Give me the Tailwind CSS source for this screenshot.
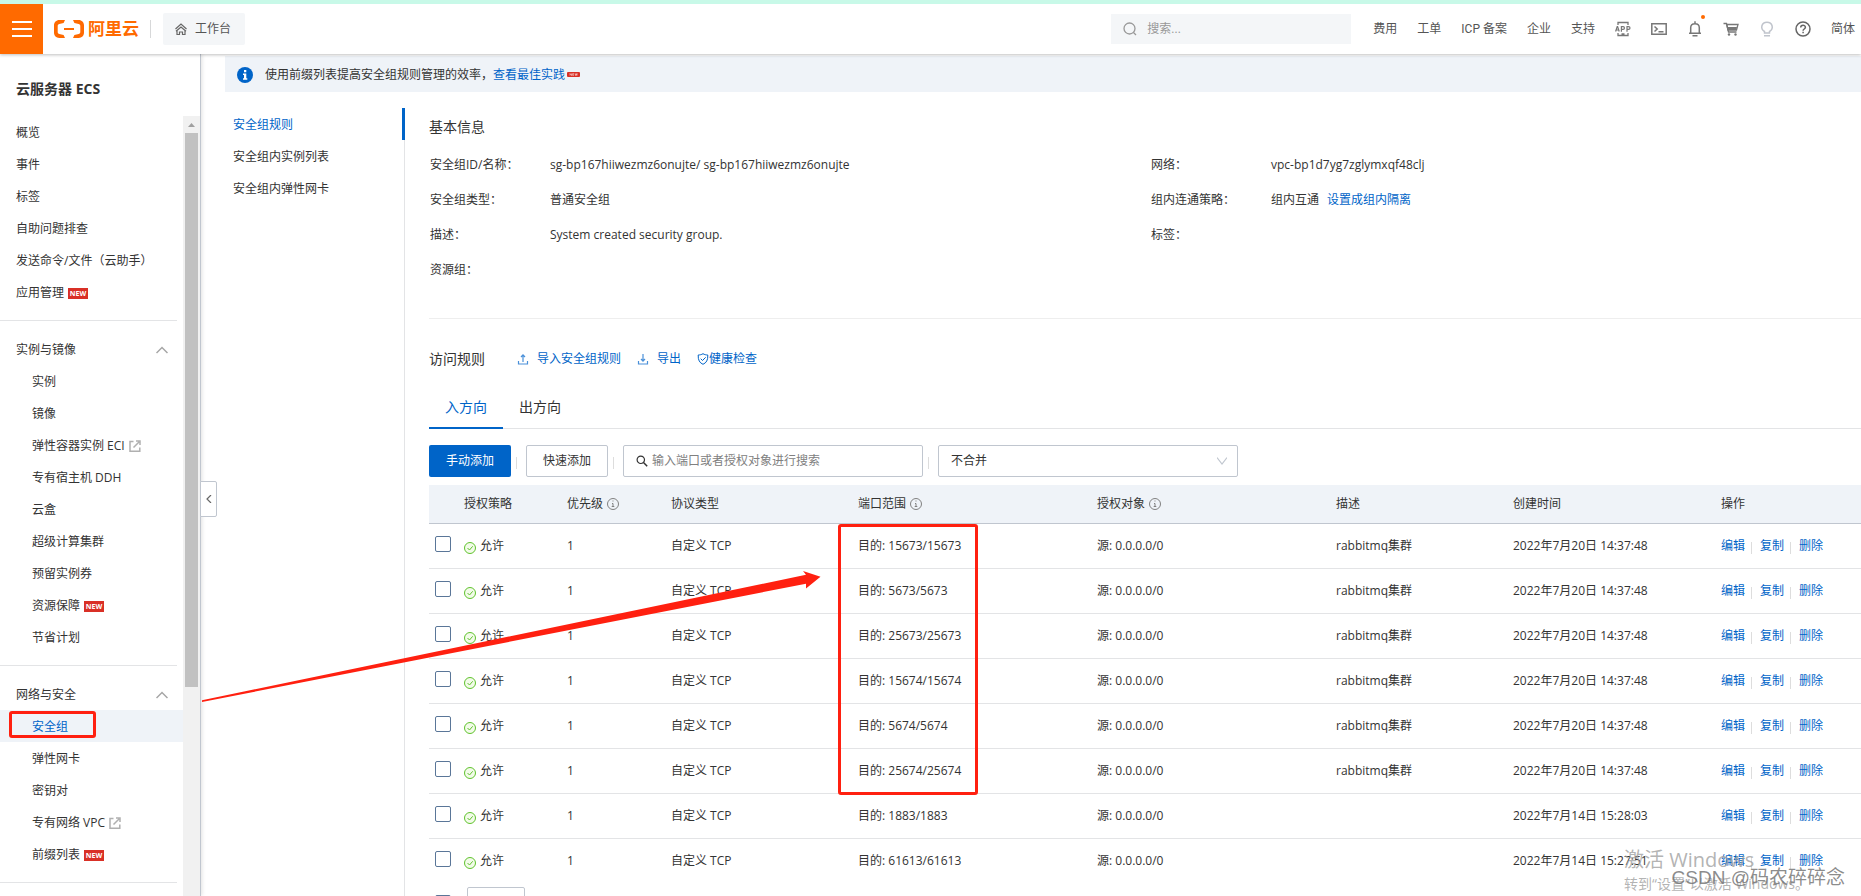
<!DOCTYPE html>
<html lang="zh-CN">
<head>
<meta charset="utf-8">
<title>云服务器 ECS - 安全组规则</title>
<script src="https://cdn.jsdelivr.net/npm/@tailwindcss/browser@4"></script>
</head>
<body class="relative flex h-screen flex-col overflow-hidden bg-white font-['Open_Sans','Noto_Sans_CJK_SC',sans-serif] text-[12px] leading-4 text-[#333333]">

<header class="relative z-10 flex h-[54px] shrink-0 items-stretch border-t-4 border-[#c8f9e8] bg-white font-['Roboto','Noto_Sans_CJK_SC',sans-serif] text-[#555555] shadow-[0_1px_3px_rgba(0,0,0,0.25)]">
  <button type="button" aria-label="菜单" class="flex w-[43px] items-center justify-center bg-[#ff6a00]">
    <svg class="h-4 w-5" viewBox="0 0 20 16" fill="#fff"><path d="M0 0h20v2H0zM0 7h20v2H0zM0 14h20v2H0z"/></svg>
  </button>
  <a href="#" class="ml-[11px] flex items-center gap-1 text-[17px] font-bold text-[#ff6a00]">
    <svg class="h-5 w-[30px]" viewBox="0 0 30 20" fill="#ff6a00"><path d="M11 1 9.600 4 5.300 5C4.300 5.300 3.700 6 3.700 7v6c0 1 .6 1.700 1.600 2L9.600 16 11 19H5.200C2.300 19 0 16.700 0 13.800V6.200C0 3.300 2.300 1 5.200 1zM19 1l1.400 3 4.300 1c1 .3 1.600 1 1.600 2v6c0 1-.6 1.700-1.600 2l-4.300 1L19 19h5.800c2.900 0 5.200-2.300 5.200-5.200V6.200C30 3.300 27.700 1 24.800 1zM10 9h10v2H10z"/></svg>
    <span>阿里云</span>
  </a>
  <span class="ml-[11px] h-[18px] w-px self-center bg-[#d7d8d9]"></span>
  <a href="#" class="ml-3 flex h-8 w-[82px] items-center gap-2 self-center rounded-[2px] bg-[#f4f6f8] pl-3">
    <svg class="size-3" viewBox="0 0 12 12" fill="none" stroke="#666" stroke-width="1.2"><path d="M.5 6 6 1l5.500 5M1 8.300 6 4l5 4.300M2 7.500v4h2.500V9h3v2.500H10v-4"/></svg>
    <span>工作台</span>
  </a>
  <label class="ml-auto flex h-[30px] w-[240px] items-center gap-[10px] self-center bg-[#f4f6f8] pl-3 text-[#999999]">
    <svg class="size-[14px] shrink-0" viewBox="0 0 14 14" fill="none" stroke="#999" stroke-width="1.300"><circle cx="6.500" cy="6.500" r="5.500"/><path d="m10.500 10.500 2.500 2.500"/></svg>
    <input type="text" placeholder="搜索..." aria-label="搜索" class="w-full min-w-0 bg-transparent outline-none placeholder:text-[#999999]">
  </label>
  <nav class="ml-[22px] mr-[6px] flex items-center gap-5 whitespace-nowrap">
    <a href="#">费用</a>
    <a href="#">工单</a>
    <a href="#">ICP 备案</a>
    <a href="#">企业</a>
    <a href="#">支持</a>
    <a href="#" aria-label="App">
      <svg class="size-4" viewBox="0 0 16 16" fill="none" stroke="#777" stroke-width="1.300"><path d="M3 4V1.500h10V4M3 12v2.500h10V12M6.500 13h3"/><path d="M.6 10.500 2.200 5.500h.4l1.600 5M1.200 9h2.500M6.400 10.800V5.700h1.700c1.800 0 1.800 2.600 0 2.600H6.400M12 10.800V5.700h1.500c2 0 2 2.600 0 2.600H12" stroke-width="1.200"/></svg>
    </a>
    <a href="#" aria-label="Cloud Shell">
      <svg class="size-4" viewBox="0 0 16 16" fill="none" stroke="#777" stroke-width="1.500"><path d="M.8 2.800h14.400v10.500H.8z"/><path d="m3.500 5.500 2.700 2.500-2.700 2.500M7.500 10.700h5"/></svg>
    </a>
    <a href="#" aria-label="消息" class="relative">
      <svg class="size-4" viewBox="0 0 16 16" fill="none" stroke="#777" stroke-width="1.500"><path d="M2 12.200h12M3.700 12V6.700c0-5.400 8.600-5.400 8.600 0V12M8 .3v2M5.500 14.800h5"/></svg>
      <span class="absolute -top-1.5 left-3.5 size-1 rounded-full bg-[#ff6a00]"></span>
    </a>
    <a href="#" aria-label="购物车">
      <svg class="size-4" viewBox="0 0 16 16"><path d="M.5 2.500h3L5.500 11h8" fill="none" stroke="#777" stroke-width="1.300"/><path d="M3.700 3.500H15L13.500 9H5z" fill="none" stroke="#777" stroke-width="1.300"/><path d="M4.500 6h9.500l-.7 3H5z" fill="#777"/><circle cx="6" cy="13.500" r="1.200" fill="#777"/><circle cx="12.500" cy="13.500" r="1.200" fill="#777"/></svg>
    </a>
    <a href="#" aria-label="提示">
      <svg class="size-4" viewBox="0 0 16 16" fill="none" stroke="#c0c4cc" stroke-width="1.500"><path d="M5.500 12v-1.500C.8 7.500 2.500 1.200 8 1.200s7.200 6.300 2.500 9.300V12zM5 14.800h6"/></svg>
    </a>
    <a href="#" aria-label="帮助">
      <svg class="size-4" viewBox="0 0 16 16" fill="none" stroke="#666" stroke-width="1.500"><circle cx="8" cy="8" r="7"/><path d="M5.700 6.600c0-3.200 4.700-2.900 4.700-.3 0 1.700-2.300 1.700-2.300 3.400M8.100 10.800v1.500"/></svg>
    </a>
    <a href="#">简体</a>
  </nav>
</header>

<div class="flex min-h-0 flex-1">
  <aside class="relative z-[5] flex w-[201px] shrink-0 flex-col border-r border-[#c0c6cf] bg-white shadow-[1px_0_4px_rgba(0,0,0,0.12)]">
    <h1 class="h-[62px] shrink-0 pt-6 pl-4 text-[14px] leading-[22px] font-bold">云服务器 ECS</h1>
    <div class="flex min-h-0 flex-1">
      <nav class="min-w-0 flex-1 overflow-hidden leading-8">
        <ul>
          <li><a href="#" class="block h-8 pt-px pl-4">概览</a></li>
          <li><a href="#" class="block h-8 pt-px pl-4">事件</a></li>
          <li><a href="#" class="block h-8 pt-px pl-4">标签</a></li>
          <li><a href="#" class="block h-8 pt-px pl-4">自助问题排查</a></li>
          <li><a href="#" class="block h-8 pt-px pl-4">发送命令/文件（云助手）</a></li>
          <li><a href="#" class="flex h-8 items-center gap-1 pt-0.5 pl-4">应用管理<span class="h-[11px] w-5 bg-[#d93026] text-center text-[7px] leading-[11px] font-bold text-white">NEW</span></a></li>
        </ul>
        <section>
          <button type="button" class="mt-3 mr-1.5 flex h-[45px] w-[177px] items-center justify-between border-t border-[#e3e4e6] pt-3.5 pr-[9px] pl-4">实例与镜像
            <svg class="h-2 w-3" viewBox="0 0 12 8" fill="none" stroke="#a6a6a6" stroke-width="1.500"><path d="m.5 7 5.500-5.500L11.500 7"/></svg>
          </button>
          <ul>
            <li><a href="#" class="block h-8 pt-px pl-8">实例</a></li>
            <li><a href="#" class="block h-8 pt-px pl-8">镜像</a></li>
            <li><a href="#" class="flex h-8 items-center gap-1 pt-0.5 pl-8">弹性容器实例 ECI
              <svg class="size-3" viewBox="0 0 12 12" fill="none" stroke="#b0b0b0" stroke-width="1.500"><path d="M4.500 1.500H1v9.700h9.800V7.500M4.500 7.500 10 2M7 1h4v4"/></svg></a></li>
            <li><a href="#" class="block h-8 pt-px pl-8">专有宿主机 DDH</a></li>
            <li><a href="#" class="block h-8 pt-px pl-8">云盒</a></li>
            <li><a href="#" class="block h-8 pt-px pl-8">超级计算集群</a></li>
            <li><a href="#" class="block h-8 pt-px pl-8">预留实例券</a></li>
            <li><a href="#" class="flex h-8 items-center gap-1 pt-0.5 pl-8">资源保障<span class="h-[11px] w-5 bg-[#d93026] text-center text-[7px] leading-[11px] font-bold text-white">NEW</span></a></li>
            <li><a href="#" class="block h-8 pt-px pl-8">节省计划</a></li>
          </ul>
        </section>
        <section>
          <button type="button" class="mt-3 mr-1.5 flex h-[45px] w-[177px] items-center justify-between border-t border-[#e3e4e6] pt-3.5 pr-[9px] pl-4">网络与安全
            <svg class="h-2 w-3" viewBox="0 0 12 8" fill="none" stroke="#a6a6a6" stroke-width="1.500"><path d="m.5 7 5.500-5.500L11.500 7"/></svg>
          </button>
          <ul>
            <li class="relative"><a href="#" aria-current="page" class="block h-8 bg-[#eff3f8] pt-px pl-8 text-[#0064c8]">安全组</a>
              <span class="pointer-events-none absolute top-px left-[9px] h-[27px] w-[87px] rounded-[3px] border-3 border-[#ff2010]"></span></li>
            <li><a href="#" class="block h-8 pt-px pl-8">弹性网卡</a></li>
            <li><a href="#" class="block h-8 pt-px pl-8">密钥对</a></li>
            <li><a href="#" class="flex h-8 items-center gap-1 pt-0.5 pl-8">专有网络 VPC
              <svg class="size-3" viewBox="0 0 12 12" fill="none" stroke="#b0b0b0" stroke-width="1.500"><path d="M4.500 1.500H1v9.700h9.800V7.500M4.500 7.500 10 2M7 1h4v4"/></svg></a></li>
            <li><a href="#" class="flex h-8 items-center gap-1 pt-0.5 pl-8">前缀列表<span class="h-[11px] w-5 bg-[#d93026] text-center text-[7px] leading-[11px] font-bold text-white">NEW</span></a></li>
          </ul>
          <div class="mt-3 w-[177px] border-t border-[#e3e4e6]"></div>
        </section>
      </nav>
      <div class="flex w-[17px] flex-col items-center bg-[#f1f1f1]" aria-hidden="true">
        <svg class="h-[17px] w-[17px]" viewBox="0 0 17 17" fill="#a0a0a0"><path d="m5 11 3.500-4 3.500 4z"/></svg>
        <div class="h-[554px] w-[13px] bg-[#c1c1c1]"></div>
      </div>
    </div>
    <button type="button" aria-label="收起" class="absolute top-[427px] left-[200px] flex h-9 w-[17px] items-center justify-center rounded-r-[2px] border border-[#c0c6cf] bg-white">
      <svg class="h-2 w-[6px]" viewBox="0 0 6 8" fill="none" stroke="#666" stroke-width="1.200"><path d="M5 0 1 4l4 4"/></svg>
    </button>
  </aside>

  <main class="flex min-w-0 flex-1 flex-col pt-0.5 pl-6">
    <div class="flex h-9 shrink-0 items-center bg-[#eff3f8] pt-px pl-3">
      <svg class="mr-3 size-4" viewBox="0 0 16 16"><circle cx="8" cy="8" r="8" fill="#0064c8"/><path d="M7 3h2.300v2.200H7zM6 6.500h3.300v4.700h1v1.600H6v-1.600h1V8.100H6z" fill="#fff"/></svg>
      <span>使用前缀列表提高安全组规则管理的效率，</span><a href="#" class="text-[#0064c8]">查看最佳实践</a>
      <svg class="ml-0.5 h-[5px] w-[13px]" viewBox="0 0 13 5" aria-hidden="true"><rect width="13" height="5" rx="1" fill="#d93026"/><path d="M3 3.500v-2l1.500 2v-2M6.800 1.500H5.700v2h1.100M5.700 2.500h1M8 1.500l.6 2 .6-2 .6 2 .6-2" fill="none" stroke="#fff" stroke-width=".5"/></svg>
    </div>

    <div class="flex min-h-0 flex-1 pt-4">
      <nav class="flex w-[180px] shrink-0 flex-col border-r border-[#e3e4e6] leading-8">
        <a href="#" aria-current="page" class="-mr-px h-8 border-r-3 border-[#0064c8] pt-px pl-2 text-[#0064c8]">安全组规则</a>
        <a href="#" class="h-8 pt-px pl-2">安全组内实例列表</a>
        <a href="#" class="h-8 pt-px pl-2">安全组内弹性网卡</a>
      </nav>

      <div class="-mr-2.5 ml-6 min-w-0 flex-1 overflow-hidden pt-1">
        <h2 class="text-[14px] leading-[30px]">基本信息</h2>
        <div class="mt-[5px] grid grid-cols-2 leading-[35px]">
          <dl class="grid grid-cols-[120px_1fr] content-start pl-px">
            <dt>安全组ID/名称：</dt><dd>sg-bp167hiiwezmz6onujte/ sg-bp167hiiwezmz6onujte</dd>
            <dt>安全组类型：</dt><dd>普通安全组</dd>
            <dt>描述：</dt><dd>System created security group.</dd>
            <dt>资源组：</dt><dd></dd>
          </dl>
          <dl class="grid grid-cols-[120px_1fr] content-start pl-px">
            <dt>网络：</dt><dd>vpc-bp1d7yg7zglymxqf48clj</dd>
            <dt>组内连通策略：</dt><dd>组内互通<a href="#" class="ml-2 text-[#0064c8]">设置成组内隔离</a></dd>
            <dt>标签：</dt><dd></dd>
          </dl>
        </div>
        <hr class="mt-[31px] border-[#eeeeee]">

        <div class="mt-6 flex h-8 items-center">
          <h2 class="text-[14px]">访问规则</h2>
          <a href="#" class="ml-8 flex items-center gap-2 text-[#0064c8]">
            <svg class="size-3" viewBox="0 0 12 12" fill="none" stroke="#4a90d9" stroke-width="1.200"><path d="M1.500 8v3h9V8M6 9V2M4 4l2-2.200L8 4"/></svg>导入安全组规则</a>
          <a href="#" class="ml-4 flex items-center gap-2 text-[#0064c8]">
            <svg class="size-3" viewBox="0 0 12 12" fill="none" stroke="#4a90d9" stroke-width="1.200"><path d="M1.500 8v3h9V8M6 1v7M4 6l2 2.200L8 6"/></svg>导出</a>
          <a href="#" class="ml-4 flex items-center text-[#0064c8]">
            <svg class="size-3" viewBox="0 0 12 12" fill="none" stroke="#0064c8"><path d="M6 .7c1.500 1 3 1.200 4.800 1.300C11 7 9.500 9.800 6 11.300 2.500 9.800 1 7 1.200 2 3 1.900 4.500 1.700 6 .7zM3.700 5.700l1.800 1.800L8.700 4.300"/></svg>健康检查</a>
        </div>

        <div role="tablist" class="mt-3 flex h-[42px] border-b border-[#e3e4e6] text-[14px]">
          <button type="button" role="tab" aria-selected="true" class="-mb-px h-[42px] border-b-2 border-[#0064c8] px-4 text-[#0064c8]">入方向</button>
          <button type="button" role="tab" aria-selected="false" class="-mb-px h-[42px] border-b-2 border-transparent px-4">出方向</button>
        </div>

        <div class="mt-4 flex h-8 items-center">
          <button type="button" class="h-8 w-[82px] rounded-[2px] bg-[#0064c8] text-white">手动添加</button>
          <span class="mx-[5px] mt-1 h-3 w-px bg-[#dddddd]"></span>
          <button type="button" class="ml-1 h-8 w-[82px] rounded-[2px] border border-[#c0c6cf]">快速添加</button>
          <span class="mx-[5px] mt-1 h-3 w-px bg-[#dddddd]"></span>
          <label class="ml-1 flex h-8 w-[300px] items-center gap-1 rounded-[2px] border border-[#c0c6cf] px-3">
            <svg class="size-3 shrink-0" viewBox="0 0 12 12" fill="none" stroke="#333" stroke-width="1.200"><circle cx="4.800" cy="4.800" r="3.700"/><path d="m7.500 7.500 3.700 3.700" stroke-width="1.500"/></svg>
            <input type="text" placeholder="输入端口或者授权对象进行搜索" aria-label="搜索规则" class="min-w-0 flex-1 outline-none placeholder:text-[#808080]">
          </label>
          <span class="mx-[5px] mt-1 h-3 w-px bg-[#dddddd]"></span>
          <div class="ml-1 grid h-8 w-[300px] items-center">
            <select aria-label="合并方式" class="col-start-1 row-start-1 h-8 w-full appearance-none rounded-[2px] border border-[#c0c6cf] bg-white pl-3">
              <option>不合并</option>
            </select>
            <svg class="pointer-events-none col-start-1 row-start-1 mr-[11px] h-2 w-[10px] justify-self-end" viewBox="0 0 10 8" fill="none" stroke="#c0c6cf" stroke-width="1.200"><path d="m0 .5 5 6.500 5-6.500"/></svg>
          </div>
        </div>

        <div class="relative mt-2">
          <table class="w-full table-fixed border-separate border-spacing-0 text-left">
            <colgroup>
              <col class="w-[35px]"><col class="w-[103px]"><col class="w-[104px]"><col class="w-[187px]"><col class="w-[239px]"><col class="w-[239px]"><col class="w-[177px]"><col class="w-[208px]"><col>
            </colgroup>
            <thead>
              <tr class="h-[39px] bg-[#eff3f8] *:border-b *:border-[#c0c6cf] *:font-normal">
                <th></th>
                <th>授权策略</th>
                <th><span class="flex items-center gap-1">优先级<svg class="size-3" viewBox="0 0 12 12" fill="none" stroke="#808080"><circle cx="6" cy="6" r="5.500"/><path d="M5.500 3h1M5 5.500h1v3M4.700 8.500h2.600"/></svg></span></th>
                <th>协议类型</th>
                <th><span class="flex items-center gap-1">端口范围<svg class="size-3" viewBox="0 0 12 12" fill="none" stroke="#808080"><circle cx="6" cy="6" r="5.500"/><path d="M5.500 3h1M5 5.500h1v3M4.700 8.500h2.600"/></svg></span></th>
                <th><span class="flex items-center gap-1">授权对象<svg class="size-3" viewBox="0 0 12 12" fill="none" stroke="#808080"><circle cx="6" cy="6" r="5.500"/><path d="M5.500 3h1M5 5.500h1v3M4.700 8.500h2.600"/></svg></span></th>
                <th>描述</th>
                <th>创建时间</th>
                <th>操作</th>
              </tr>
            </thead>
            <tbody id="rules"></tbody>
          </table>
          <span class="pointer-events-none absolute top-[39px] left-[409px] h-[271px] w-[140px] rounded-[3px] border-3 border-[#ff2010]"></span>
        </div>

        <div class="flex items-center gap-4 pt-[3px] pl-1.5">
          <input type="checkbox" aria-label="全选" class="size-4 appearance-none rounded-[2px] border border-[#5a7698] bg-white checked:bg-[#0064c8]">
          <button type="button" aria-label="批量操作" class="h-8 w-[58px] rounded-[2px] border border-[#c0c6cf]"></button>
        </div>
      </div>
    </div>
  </main>
</div>

<svg class="pointer-events-none absolute top-[565px] left-[200px] z-20 h-[140px] w-[625px]" viewBox="0 0 625 140" aria-hidden="true"><path d="M2 135.300 606 9.800 603 6l17.500 5.700L606 23.500V18.700L2 137z" fill="#ff2010"/></svg>

<div class="pointer-events-none absolute right-[45px] bottom-0 z-20 w-[192px] whitespace-nowrap text-[#a0a0a0]/80" aria-hidden="true">
  <p class="text-[20px] leading-6">激活 Windows</p>
  <p class="text-[14px] leading-6">转到“设置”以激活 Windows。</p>
</div>
<p class="pointer-events-none absolute right-4 bottom-1 z-20 font-['Liberation_Sans','Noto_Sans_CJK_SC',sans-serif] text-[19px] leading-7 whitespace-nowrap text-[#777777]/85" aria-hidden="true">CSDN @码农碎碎念</p>

<script>
const rules = [
  ['15673/15673', 'rabbitmq集群', '2022年7月20日 14:37:48'],
  ['5673/5673', 'rabbitmq集群', '2022年7月20日 14:37:48'],
  ['25673/25673', 'rabbitmq集群', '2022年7月20日 14:37:48'],
  ['15674/15674', 'rabbitmq集群', '2022年7月20日 14:37:48'],
  ['5674/5674', 'rabbitmq集群', '2022年7月20日 14:37:48'],
  ['25674/25674', 'rabbitmq集群', '2022年7月20日 14:37:48'],
  ['1883/1883', '', '2022年7月14日 15:28:03'],
  ['61613/61613', '', '2022年7月14日 15:27:51'],
];
document.getElementById('rules').innerHTML = rules.map(([port, desc, time]) => `
  <tr class="h-[45px] *:border-b *:border-[#e3e4e6] last:*:border-transparent">
    <td class="pb-1 pl-1.5"><input type="checkbox" aria-label="选择 ${port}" class="block size-4 appearance-none rounded-[2px] border border-[#5a7698] bg-white checked:bg-[#0064c8]"></td>
    <td><span class="flex items-center gap-1"><svg class="mt-1 size-3" viewBox="0 0 12 12" fill="#f2fbe9" stroke="#5fc22d"><circle cx="6" cy="6" r="5.500"/><path d="m3.500 6 2 2L8.700 4.300" fill="none"/></svg>允许</span></td>
    <td>1</td>
    <td>自定义 TCP</td>
    <td>目的: ${port}</td>
    <td>源: 0.0.0.0/0</td>
    <td>${desc}</td>
    <td>${time}</td>
    <td><span class="flex items-center text-[#0064c8]"><a href="#">编辑</a><i class="mt-1 mr-2 ml-1.5 h-3 w-px bg-[#dddddd]"></i><a href="#">复制</a><i class="mt-1 mr-2 ml-1.5 h-3 w-px bg-[#dddddd]"></i><a href="#">删除</a></span></td>
  </tr>`).join('');
</script>
</body>
</html>
